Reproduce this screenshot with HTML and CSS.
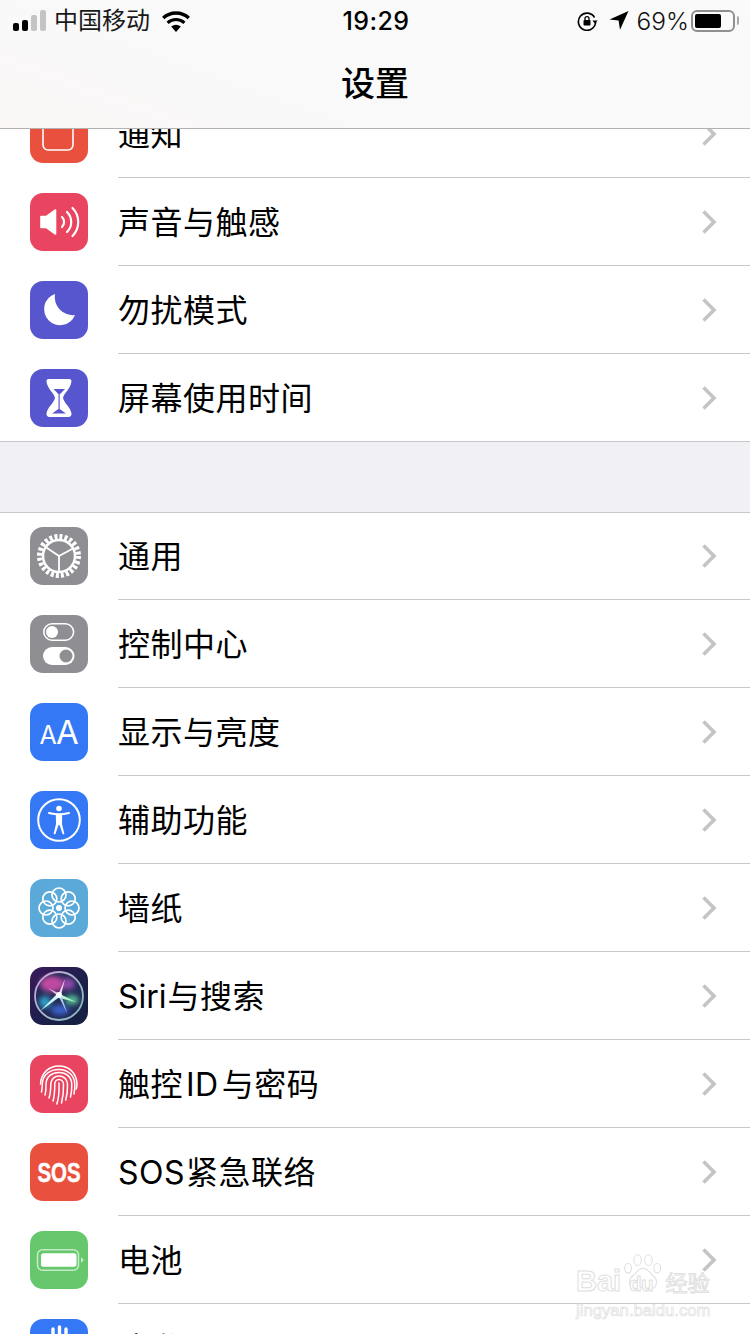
FILE: index.html
```html
<!DOCTYPE html>
<html lang="zh-CN">
<head>
  <meta charset="UTF-8">
  <meta name="viewport" content="width=device-width, initial-scale=1.0">
  <title>设置</title>
  <link rel="stylesheet" href="styles.css">
</head>
<body>
  <svg class="defs" width="0" height="0" aria-hidden="true">
    <defs>
      <symbol id="chevron" viewBox="0 0 16 26">
        <path d="M2.5 2.5 13 13 2.5 23.5" fill="none" stroke="#c4c4c7" stroke-width="3.6"/>
      </symbol>
      <linearGradient id="siri-bg" x1="0" y1="0" x2="1" y2="1">
        <stop offset="0" stop-color="#3b1a5c"/>
        <stop offset="0.55" stop-color="#1c1f4c"/>
        <stop offset="1" stop-color="#14203f"/>
      </linearGradient>
      <linearGradient id="siri-ring" x1="0" y1="0" x2="1" y2="1">
        <stop offset="0" stop-color="#c9a0d8"/>
        <stop offset="0.5" stop-color="#a9b8c8"/>
        <stop offset="1" stop-color="#7fb8c0"/>
      </linearGradient>
      <filter id="siri-blur" x="-30%" y="-30%" width="160%" height="160%">
        <feGaussianBlur stdDeviation="2.6"/>
      </filter>
      <filter id="siri-soft" x="-20%" y="-20%" width="140%" height="140%">
        <feGaussianBlur stdDeviation="0.7"/>
      </filter>
    </defs>
  </svg>

  <header class="nav">
    <div class="status-bar">
      <div class="status-left">
        <div class="signal">
          <i class="bar bar-1"></i><i class="bar bar-2"></i><i class="bar bar-3 off"></i><i class="bar bar-4 off"></i>
        </div>
        <span class="carrier">中国移动</span>
        <svg class="wifi" width="30" height="22" viewBox="0 0 30 22">
          <path d="M15 22 10.2 16.6a7 7 0 0 1 9.6 0Z" fill="#000"/>
          <path d="M6.6 12.8a12.3 12.3 0 0 1 16.8 0" fill="none" stroke="#000" stroke-width="3.2"/>
          <path d="M2.2 8a18.7 18.7 0 0 1 25.6 0" fill="none" stroke="#000" stroke-width="3.4"/>
        </svg>
      </div>
      <div class="status-time">19:29</div>
      <div class="status-right">
        <svg class="rot-lock" width="21" height="20" viewBox="0 0 21 20">
          <path d="M17.5 6.5A8.6 8.6 0 1 0 18.6 11" fill="none" stroke="#000" stroke-width="1.6"/>
          <path d="M15.4 9.4h5.2l-2.6 3.4Z" fill="#000"/>
          <rect x="6.5" y="9" width="7" height="5.6" rx="1" fill="#000"/>
          <path d="M8 9.4V7.6a2 2 0 0 1 4 0v1.8" fill="none" stroke="#000" stroke-width="1.3"/>
        </svg>
        <svg class="loc" width="20" height="19" viewBox="0 0 20 19">
          <path d="M19.5 0 0.5 8.4 9.6 9.6 11 18.8Z" fill="#000"/>
        </svg>
        <span class="batt-pct">69%</span>
        <div class="battery">
          <div class="battery-body"><div class="battery-fill"></div></div>
          <div class="battery-tip"></div>
        </div>
      </div>
    </div>
    <h1 class="nav-title">设置</h1>
  </header>

  <main class="page">
    <section class="group">
      <div class="row">
        <div class="icon red">
          <svg viewBox="0 0 58 58">
            <rect x="13" y="9" width="30" height="36" rx="5" fill="none" stroke="#fff" stroke-width="1.6"/>
            <circle cx="42" cy="13" r="5" fill="#fff"/>
          </svg>
        </div>
        <div class="row-body"><span class="label">通知</span><svg class="chev"><use href="#chevron"/></svg></div>
      </div>

      <div class="row">
        <div class="icon rose">
          <svg viewBox="0 0 58 58">
            <path d="M11 23.5h5.500L25.500 17v24l-9-6.500H11Z" fill="#fff" stroke="#fff" stroke-width="1.6" stroke-linejoin="round"/>
            <g fill="none" stroke="#fff" stroke-width="2.2" stroke-linecap="round">
              <path d="M32 24a7 7 0 0 1 0 10"/>
              <path d="M37 19a14 14 0 0 1 0 20"/>
              <path d="M42.500 15a20 20 0 0 1 0 28"/>
            </g>
          </svg>
        </div>
        <div class="row-body"><span class="label">声音与触感</span><svg class="chev"><use href="#chevron"/></svg></div>
      </div>

      <div class="row">
        <div class="icon indigo">
          <svg viewBox="0 0 58 58"><path d="M25 13A16 16 0 1 0 45 34 18 18 0 0 1 25 13Z" fill="#fff"/></svg>
        </div>
        <div class="row-body"><span class="label">勿扰模式</span><svg class="chev"><use href="#chevron"/></svg></div>
      </div>

      <div class="row">
        <div class="icon indigo">
          <svg viewBox="0 0 58 58">
            <path d="M19 10h20a2.500 2.500 0 0 1 2.400 2.800C40.500 20 34 24 33 29c1 5 7.500 9 8.500 15.500a3 3 0 0 1-3 3.500h-19a3 3 0 0 1-3-3.500c1-6.500 7.500-10.500 8.500-15.500-1-5-7.500-9-8.500-16.200A2.500 2.500 0 0 1 19 10Z" fill="#fff"/>
            <path d="M23.500 20h11.500l-4.800 5h-1.900Z" fill="#5856cf"/>
            <path d="M28.500 25h1.200v15l6.300 4.500H22l6.500-4.500Z" fill="#5856cf"/>
          </svg>
        </div>
        <div class="row-body last"><span class="label">屏幕使用时间</span><svg class="chev"><use href="#chevron"/></svg></div>
      </div>
    </section>

    <section class="group group-second">
      <div class="row">
        <div class="icon gray">
          <svg viewBox="0 0 58 58">
            <circle cx="29" cy="29" r="19.500" fill="none" stroke="#fff" stroke-width="5" stroke-dasharray="3 2.100"/>
            <circle cx="29" cy="29" r="16" fill="none" stroke="#fff" stroke-width="2.500"/>
            <g stroke="#fff" stroke-width="1.8" fill="none">
              <path d="M29 29V45"/>
              <path d="M29 29 15.500 20"/>
              <path d="M29 29 43 21.500"/>
            </g>
          </svg>
        </div>
        <div class="row-body"><span class="label">通用</span><svg class="chev"><use href="#chevron"/></svg></div>
      </div>

      <div class="row">
        <div class="icon gray">
          <svg viewBox="0 0 58 58">
            <rect x="13.800" y="8.800" width="29.800" height="16.400" rx="8.200" fill="none" stroke="#fff" stroke-width="1.600"/>
            <circle cx="22" cy="17" r="6" fill="#fff"/>
            <rect x="13" y="32" width="31.500" height="18" rx="9" fill="#fff"/>
            <circle cx="36" cy="41" r="6.500" fill="#8e8e93"/>
          </svg>
        </div>
        <div class="row-body"><span class="label">控制中心</span><svg class="chev"><use href="#chevron"/></svg></div>
      </div>

      <div class="row">
        <div class="icon blue">
          <svg viewBox="0 0 58 58">
            <text class="aa" x="9.500" y="41" font-size="25">A</text>
            <text class="aa" x="26" y="41" font-size="33">A</text>
          </svg>
        </div>
        <div class="row-body"><span class="label">显示与亮度</span><svg class="chev"><use href="#chevron"/></svg></div>
      </div>

      <div class="row">
        <div class="icon blue">
          <svg viewBox="0 0 58 58">
            <circle cx="29" cy="29" r="20.800" fill="none" stroke="#fff" stroke-width="2"/>
            <circle cx="29" cy="17.500" r="2.800" fill="#fff"/>
            <path d="M19 22c3.500.9 6.500 1.300 10 1.300s6.500-.4 10-1.300" fill="none" stroke="#fff" stroke-width="2" stroke-linecap="round"/>
            <path d="M25.800 23h6.400l-.2 10 2.300 9.500a.9.9 0 0 1-1.700.4L29.500 34h-1l-3.100 8.900a.9.9 0 0 1-1.700-.4L26 33Z" fill="#fff"/>
          </svg>
        </div>
        <div class="row-body"><span class="label">辅助功能</span><svg class="chev"><use href="#chevron"/></svg></div>
      </div>

      <div class="row">
        <div class="icon sky">
          <svg viewBox="0 0 58 58">
            <g fill="none" stroke="#fff" stroke-width="1.700">
              <circle cx="29" cy="16" r="7"/>
              <circle cx="29" cy="16" r="7" transform="rotate(45 29 29)"/>
              <circle cx="29" cy="16" r="7" transform="rotate(90 29 29)"/>
              <circle cx="29" cy="16" r="7" transform="rotate(135 29 29)"/>
              <circle cx="29" cy="16" r="7" transform="rotate(180 29 29)"/>
              <circle cx="29" cy="16" r="7" transform="rotate(225 29 29)"/>
              <circle cx="29" cy="16" r="7" transform="rotate(270 29 29)"/>
              <circle cx="29" cy="16" r="7" transform="rotate(315 29 29)"/>
            </g>
            <circle cx="29" cy="29" r="3" fill="#fff"/>
          </svg>
        </div>
        <div class="row-body"><span class="label">墙纸</span><svg class="chev"><use href="#chevron"/></svg></div>
      </div>

      <div class="row">
        <div class="icon">
          <svg viewBox="0 0 58 58">
            <rect width="58" height="58" fill="url(#siri-bg)"/>
            <circle cx="29" cy="29" r="24" fill="#232a57"/>
            <g filter="url(#siri-blur)">
              <ellipse cx="22" cy="17" rx="12" ry="8" fill="#c04aa0"/>
              <ellipse cx="38" cy="17" rx="7" ry="6" fill="#8d4aa8"/>
              <ellipse cx="42" cy="33" rx="7" ry="5" fill="#4fb98e"/>
              <ellipse cx="30" cy="43" rx="9" ry="5" fill="#3a62c8"/>
              <ellipse cx="15" cy="35" rx="6" ry="6" fill="#2f9fc4"/>
            </g>
            <g filter="url(#siri-soft)" fill="#fff">
              <path d="M10 44 28 26 31 29Z" fill="#c8f4f4"/>
              <path d="M46 35 28 26 29 31Z" fill="#b8f0d0"/>
              <path d="M35 12 28 28 31 28Z" fill="#f2d4ee"/>
              <path d="M18 21 30 27 28 29Z" fill="#e9c0e6"/>
              <path d="M37 46 28 28 31 27Z" fill="#a8c8f0"/>
              <circle cx="29" cy="28" r="3"/>
            </g>
            <circle cx="29" cy="29" r="24" fill="none" stroke="url(#siri-ring)" stroke-width="1.800"/>
          </svg>
        </div>
        <div class="row-body"><span class="label"><span class="lat-siri">Siri</span>与搜索</span><svg class="chev"><use href="#chevron"/></svg></div>
      </div>

      <div class="row">
        <div class="icon rose">
          <svg viewBox="0 0 58 58">
            <g fill="none" stroke="#fff" stroke-width="1.500" stroke-linecap="round">
              <path d="M10.500 29c.5-11 8.500-18 18.500-18s17.500 7 18 18c0 2-.3 3.500-.8 5"/>
              <path d="M11.500 37c.8-3 .8-6 .8-8.500C13 19.500 20 14.500 29 14.500s15.500 6 15.800 14.500c.1 3.500-.2 7-.8 10"/>
              <path d="M15 40c1-3.500 1-7.500 1-11 .4-7.500 6-11.500 13-11.500S41.500 22 41.800 29c.1 5-.3 9-1.300 13"/>
              <path d="M19 43c1.500-4.500 1.800-9 1.800-14 .2-5 3.800-8 8.200-8s8.300 3 8.500 8c.2 6-.3 11-1.800 16"/>
              <path d="M23 46c1.500-5 1.800-11 1.800-17 0-2.500 1.800-4.500 4.200-4.500s4.300 2 4.500 4.500c.2 7-.4 13-2 19"/>
              <path d="M29 28c.3 8 0 15-2.200 21"/>
            </g>
          </svg>
        </div>
        <div class="row-body"><span class="label">触控<span class="lat-id">ID</span>与密码</span><svg class="chev"><use href="#chevron"/></svg></div>
      </div>

      <div class="row">
        <div class="icon red">
          <svg viewBox="0 0 58 58">
            <text class="sos" transform="translate(29 39) scale(0.73 1)" text-anchor="middle" font-size="28">SOS</text>
          </svg>
        </div>
        <div class="row-body"><span class="label"><span class="lat-sos">SOS</span>紧急联络</span><svg class="chev"><use href="#chevron"/></svg></div>
      </div>

      <div class="row">
        <div class="icon green">
          <svg viewBox="0 0 58 58">
            <rect x="7.500" y="18.800" width="41" height="20.400" rx="5" fill="none" stroke="#c6eac8" stroke-width="1.600"/>
            <rect x="11" y="22.300" width="35.500" height="13.400" rx="2.500" fill="#fff"/>
            <path d="M51 26l2.800 3-2.800 3Z" fill="#c6eac8"/>
          </svg>
        </div>
        <div class="row-body"><span class="label">电池</span><svg class="chev"><use href="#chevron"/></svg></div>
      </div>

      <div class="row">
        <div class="icon blue">
          <svg viewBox="0 0 58 58">
            <g stroke="#fff" stroke-width="3.400" stroke-linecap="round">
              <path d="M23 10V30"/><path d="M29.500 8V30"/><path d="M36 10V30"/>
            </g>
          </svg>
        </div>
        <div class="row-body"><span class="label">隐私</span><svg class="chev"><use href="#chevron"/></svg></div>
      </div>
    </section>
  </main>

  <div class="watermark">
    <svg class="paw" width="42" height="40" viewBox="0 0 62 56">
      <g fill="#fff" stroke="#e0e0e0" stroke-width="1.600">
        <ellipse cx="9" cy="21" rx="5" ry="7"/>
        <ellipse cx="23" cy="9" rx="5.500" ry="8"/>
        <ellipse cx="39" cy="9" rx="5.500" ry="8"/>
        <ellipse cx="52" cy="21" rx="5" ry="7"/>
        <path d="M31 21c-7 0-10 7-15 11-8 6-6 20 5 19 4-.4 7-1.500 10-1.500s6 1.100 10 1.500c11 1 13-13 5-19-5-4-8-11-15-11Z"/>
      </g>
    </svg>
    <div class="wm-line">
      <span class="wm-bai">Bai</span><span class="wm-du">du</span><span class="wm-jy">经验</span>
    </div>
    <div class="wm-url">jingyan.baidu.com</div>
  </div>
</body>
</html>
```

FILE: styles.css
```css
:root {
  --sep: #c8c7cc;
  --group-bg: #f0f0f5;
  --cjk: Inter, 'Noto Sans CJK SC', sans-serif;
}

* {
  box-sizing: border-box;
}

html, body {
  margin: 0;
  height: 1334px;
  overflow: hidden;
}

body {
  font-family: var(--cjk);
  color: #000;
  background: #fff;
}

.defs {
  position: absolute;
}

/* top bar lies over the scrolled list */
.nav {
  position: absolute;
  top: 0;
  left: 0;
  width: 750px;
  height: 129px;
  z-index: 2;
  background: linear-gradient(20deg, #fbf8f7 0%, #f9f9f9 35%, #fafafa 100%);
  border-bottom: 1px solid #b2b2b2;
}

.status-bar {
  display: flex;
  align-items: center;
  height: 41px;
  padding: 0 11px 0 13px;
}

.status-left {
  flex: 1;
  display: flex;
  align-items: center;
}

.signal {
  display: flex;
  align-items: flex-end;
  gap: 3px;
  height: 22px;
  margin-top: -2px;
}

.bar {
  display: block;
  width: 6px;
  border-radius: 2px;
  background: #000;
}

.bar.off {
  background: #c4c4c4;
}

.bar-1 { height: 8px; }
.bar-2 { height: 11px; }
.bar-3 { height: 16px; }
.bar-4 { height: 21px; }

.carrier {
  margin-left: 8px;
  padding-bottom: 4px;
  font-size: 24px;
  color: #1a1a1a;
}

.wifi {
  margin-left: 11px;
}

.status-time {
  font-size: 25px;
  font-weight: 500;
  letter-spacing: 0.4px;
}

.status-right {
  flex: 1;
  display: flex;
  align-items: center;
  justify-content: flex-end;
}

.loc {
  margin-left: 11px;
}

.batt-pct {
  margin-left: 8px;
  font-size: 24.500px;
  font-weight: 300;
  color: #111;
}

.battery {
  display: flex;
  align-items: center;
  margin-left: 2px;
}

.battery-body {
  width: 44px;
  height: 22px;
  padding: 2px;
  border: 2px solid #8f8f8f;
  border-radius: 6px;
}

.battery-fill {
  width: 26px;
  height: 14px;
  border-radius: 2px;
  background: #000;
}

.battery-tip {
  width: 2px;
  height: 9px;
  margin-left: 2px;
  border-radius: 0 2px 2px 0;
  background: #a8a8a8;
}

.nav-title {
  margin: 0;
  text-align: center;
  font-size: 34px;
  font-weight: 500;
  line-height: 86px;
}

/* list */
.page {
  padding-top: 90px;
  background: var(--group-bg);
}

.group {
  background: #fff;
  box-shadow: inset 0 -1px 0 var(--sep);
}

.group-second {
  margin-top: 70px;
  box-shadow: inset 0 1px 0 var(--sep);
}

.row {
  display: flex;
  align-items: center;
  gap: 30px;
  height: 88px;
  padding-left: 30px;
}

.row-body {
  flex: 1;
  align-self: stretch;
  display: flex;
  align-items: center;
  justify-content: space-between;
  padding-right: 33px;
  border-bottom: 1px solid var(--sep);
}

.row-body.last {
  border-bottom: none;
}

.label {
  padding-bottom: 4px;
  font-size: 32px;
  letter-spacing: 0.5px;
}

.lat-siri {
  letter-spacing: 0;
  margin-right: 1px;
}

.lat-id {
  margin: 0 3px;
}

.lat-sos {
  margin-right: 1px;
}

.chev {
  width: 16px;
  height: 26px;
}

.icon {
  flex: none;
  width: 58px;
  height: 58px;
  border-radius: 13px;
  overflow: hidden;
}

.icon svg {
  display: block;
  width: 58px;
  height: 58px;
}

.red { background: #ea503e; }
.rose { background: #ea4560; }
.indigo { background: #5856cf; }
.gray { background: #8e8e93; }
.blue { background: #3478f6; }
.sky { background: #5aa9d9; }
.green { background: #66c76c; }

.aa {
  font-family: Inter, sans-serif;
  font-weight: 400;
  fill: #fff;
}

.sos {
  font-family: 'Liberation Sans', sans-serif;
  font-weight: 700;
  fill: #fff;
  stroke: #fff;
  stroke-width: 0.5px;
}

/* baidu stamp over the last rows */
.watermark {
  position: absolute;
  left: 576px;
  top: 1253px;
  width: 140px;
  z-index: 3;
}

.paw {
  position: absolute;
  left: 46px;
  top: 0;
}

.wm-line {
  position: relative;
  display: flex;
  align-items: baseline;
  height: 48px;
  padding-top: 12px;
  color: #fff;
  -webkit-text-stroke: 1px #e0e0e0;
}

.wm-bai {
  font-family: 'Liberation Sans', sans-serif;
  font-size: 29px;
  font-weight: 700;
}

.wm-du {
  margin-left: 8px;
  font-family: 'Liberation Sans', sans-serif;
  font-size: 20px;
  font-weight: 700;
}

.wm-jy {
  margin-left: 12px;
  font-size: 22px;
}

.wm-url {
  position: relative;
  font-family: 'Liberation Sans', sans-serif;
  font-size: 16.700px;
  line-height: 20px;
  color: #fff;
  -webkit-text-stroke: 0.7px #e0e0e0;
}
```
